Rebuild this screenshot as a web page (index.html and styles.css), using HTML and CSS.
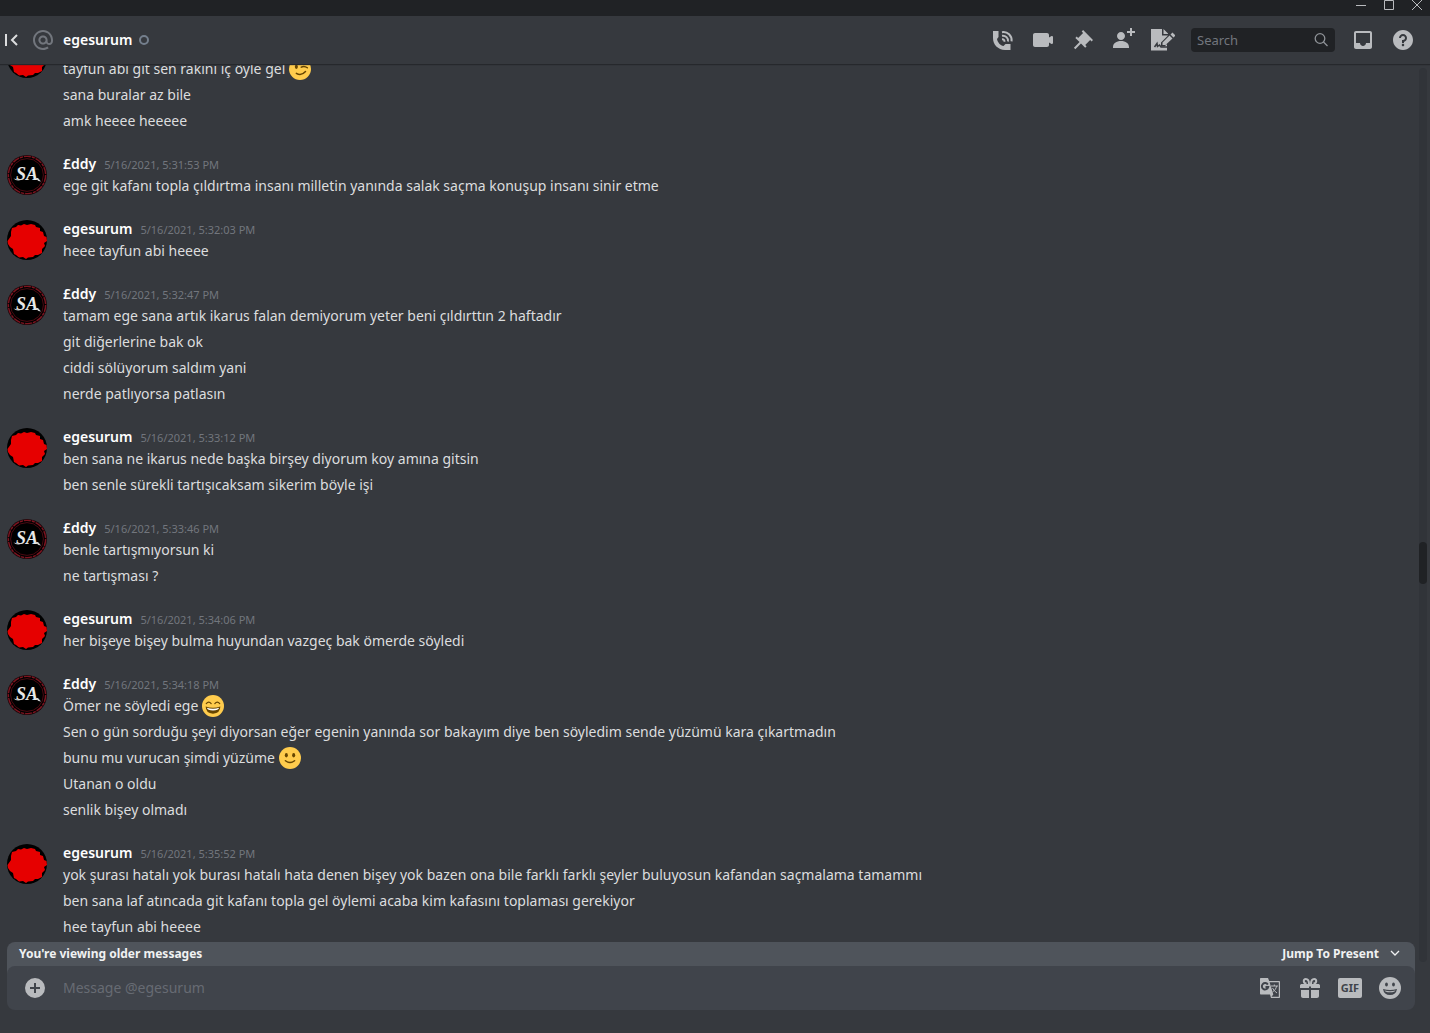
FILE: index.html
```html
<!DOCTYPE html>
<html lang="tr">
<head>
  <meta charset="UTF-8">
  <meta name="viewport" content="width=device-width, initial-scale=1.0">
  <title>@egesurum</title>
  <link rel="stylesheet" href="styles.css">
</head>
<body>
  <svg class="defs" aria-hidden="true">
    <symbol id="avatar-rose" viewBox="0 0 40 40">
      <circle cx="20" cy="20" r="20" fill="#000"/>
      <path fill="#e60000" d="M5 8 L9 7 11 5 14 5.500 17 4 20 5 24 4 28 5 29 7 33 8 33 11 36 12 37 16 39.500 17 40 21 37 23 38 26 35 29 35 33 31 35 28 35 26 37 21 37.500 19 39 16 37 12 37.500 9 35 7 34 6 29 3 27 1 24 .5 21 4 16 4 12Z"/>
    </symbol>
    <symbol id="avatar-sa" viewBox="0 0 40 40">
      <circle cx="20" cy="20" r="20" fill="#1c0508"/>
      <circle cx="20" cy="20" r="18.6" fill="#000" stroke="#7d1420" stroke-width="1.4" stroke-dasharray="7 1 3 1"/>
      <circle cx="20" cy="20" r="16.4" fill="#000" stroke="#4a0a12" stroke-width="1"/>
      <text x="20" y="25" text-anchor="middle" class="avatar-text">SA</text>
      <path d="M6.500 23.500Q10 27 15 24.500L10.500 24.500ZM28 23Q31 26.500 34 26.500L31 23Z" fill="#d0d0d0"/>
    </symbol>
    <symbol id="emoji-wink" viewBox="0 0 36 36">
      <circle cx="18" cy="18" r="18" fill="#ffcc4d"/>
      <path fill="none" stroke="#664500" stroke-width="2.4" stroke-linecap="round" d="M6 9 Q10 4 15 6 M20 15 Q25 12 30 16 M12 25 Q20 30 27 22"/>
      <ellipse cx="12" cy="14.500" rx="2.500" ry="3.500" fill="#664500"/>
    </symbol>
    <symbol id="emoji-smile" viewBox="0 0 36 36">
      <circle cx="18" cy="18" r="18" fill="#ffcc4d"/>
      <path fill="none" stroke="#664500" stroke-width="2" stroke-linecap="round" d="M7 14 Q11 9 15 14 M21 14 Q25 9 29 14"/>
      <path fill="#664500" d="M6 19 Q18 23 30 19 Q30 30 18 30.500 Q6 30 6 19Z"/>
      <path fill="#fff" d="M8 21 Q18 24 28 21 Q27 25.500 18 25.500 Q9 25.500 8 21Z"/>
    </symbol>
    <symbol id="emoji-slight" viewBox="0 0 36 36">
      <circle cx="18" cy="18" r="18" fill="#ffcc4d"/>
      <ellipse cx="12" cy="13.500" rx="2.500" ry="3.500" fill="#664500"/>
      <ellipse cx="24" cy="13.500" rx="2.500" ry="3.500" fill="#664500"/>
      <path fill="none" stroke="#664500" stroke-width="2.400" stroke-linecap="round" d="M10.500 22.500 Q18 28.500 25.500 22.500"/>
    </symbol>
  </svg>

  <div class="titlebar">
    <button aria-label="Minimize"><svg width="10" height="10"><path d="M0 5.500H10"/></svg></button>
    <button aria-label="Maximize"><svg width="10" height="10"><path d="M.5 .5H9.500V9.500H.5Z"/></svg></button>
    <button aria-label="Close"><svg width="10" height="10"><path d="M0 0L10 10M10 0L0 10"/></svg></button>
  </div>

  <header class="header">
    <button class="collapse" aria-label="Collapse sidebar">
      <svg width="14" height="14" viewBox="0 0 14 14"><path d="M2 1V13M13 2L8 7L13 12" fill="none" stroke="currentColor" stroke-width="2"/></svg>
    </button>
    <svg class="at" width="24" height="24" viewBox="0 0 24 24"><path fill="currentColor" d="M12 2C6.486 2 2 6.486 2 12C2 17.515 6.486 22 12 22C14.039 22 15.993 21.398 17.652 20.259L16.521 18.611C15.195 19.519 13.633 20 12 20C7.589 20 4 16.411 4 12C4 7.589 7.589 4 12 4C16.411 4 20 7.589 20 12V12.782C20 14.17 19.402 15 18.4 15L18.398 15.018C18.338 15.005 18.273 15 18.209 15H18C17.437 15 16.6 14.182 16.6 13.631V12C16.6 9.464 14.537 7.4 12 7.4C9.463 7.4 7.4 9.463 7.4 12C7.4 14.537 9.463 16.6 12 16.6C13.234 16.6 14.35 16.106 15.177 15.313C15.826 16.269 16.93 17 18 17L18.002 16.981C18.064 16.994 18.129 17 18.195 17H18.4C20.552 17 22 15.306 22 12.782V12C22 6.486 17.514 2 12 2ZM12 14.599C10.566 14.599 9.4 13.433 9.4 11.999C9.4 10.565 10.566 9.399 12 9.399C13.434 9.399 14.6 10.565 14.6 11.999C14.6 13.433 13.434 14.599 12 14.599Z"/></svg>
    <h1>egesurum</h1>
    <span class="status" title="Offline"></span>

    <div class="toolbar">
      <button aria-label="Start Voice Call"><svg viewBox="0 0 24 24"><path d="M2 3H7.500V9L6 11C6.500 14.500 9.500 17.500 12.500 18L14.500 16H19.500V22H14C7 21.500 2 17 2 10Z"/><path class="line" d="M11 4.200C16.500 3.200 21.200 7.800 20.600 13.300M11 7.700C14.500 7.200 17.500 10 17 13.500M11 11.300C12.700 11.200 13.600 12.200 13.500 13.800"/></svg></button>
      <button aria-label="Start Video Call"><svg viewBox="0 0 24 24"><path d="M21.526 8.149C21.231 7.966 20.862 7.951 20.553 8.105L18 9.382V7C18 5.897 17.103 5 16 5H4C2.897 5 2 5.897 2 7V17C2 18.104 2.897 19 4 19H16C17.103 19 18 18.104 18 17V14.618L20.553 15.894C20.694 15.965 20.847 16 21 16C21.183 16 21.365 15.949 21.526 15.851C21.82 15.668 22 15.347 22 15V9C22 8.653 21.82 8.332 21.526 8.149Z"/></svg></button>
      <button aria-label="Pinned Messages"><svg viewBox="0 0 24 24"><path d="M22 12L12.101 2.101L10.686 3.514L12.101 4.929L7.151 9.878V9.88L5.736 8.465L4.322 9.88L8.565 14.122L2.908 19.778L4.322 21.192L9.979 15.536L14.222 19.778L15.636 18.364L14.222 16.95L19.171 12H19.172L20.586 13.414L22 12Z"/></svg></button>
      <button aria-label="Add Friends to DM"><svg viewBox="0 0 24 24"><path d="M21 3H24V5H21V8H19V5H16V3H19V0H21V3ZM10 12C12.205 12 14 10.205 14 8C14 5.795 12.205 4 10 4C7.795 4 6 5.795 6 8C6 10.205 7.795 12 10 12ZM10 13C5.289 13 2 15.467 2 19V20H18V19C18 15.467 14.711 13 10 13Z"/></svg></button>
      <button aria-label="Edit note"><svg viewBox="0 0 24 24"><path d="M0 1H11V7.500H17L10 14.500V18.500H13.500L16 16V22.500H0ZM12.500 1L17 5.500V6H12.500Z"/><path d="M11.500 14.500L18.500 7.500L21.500 10.500L14.500 17H11.500ZM19.500 6.500L21.500 4.500L24.500 7.500L22.500 9.500Z"/><path class="scribble" d="M3.500 19L6 15.500L6.500 18.500L8.500 17L10 19H16"/></svg></button>
      <label class="search">
        <input type="text" placeholder="Search" aria-label="Search">
        <svg width="16" height="16" viewBox="0 0 16 16"><path d="M7 1.700A4.800 4.800 0 1 0 7 11.300A4.800 4.800 0 1 0 7 1.700M10.500 10L14.500 14" fill="none" stroke="currentColor" stroke-width="1.300"/></svg>
      </label>
      <button aria-label="Inbox"><svg viewBox="0 0 24 24"><path d="M19 3H4.990C3.880 3 3.010 3.890 3.010 5L3 19C3 20.100 3.880 21 4.990 21H19C20.100 21 21 20.100 21 19V5C21 3.890 20.100 3 19 3ZM19 15H15C15 16.660 13.650 18 12 18C10.350 18 9 16.660 9 15H4.990V5H19V15Z"/></svg></button>
      <button aria-label="Help"><svg viewBox="0 0 24 24"><path d="M12 2C6.486 2 2 6.487 2 12C2 17.515 6.486 22 12 22C17.514 22 22 17.515 22 12C22 6.487 17.514 2 12 2ZM12 18.250C11.310 18.250 10.750 17.691 10.750 17C10.750 16.310 11.310 15.750 12 15.750C12.690 15.750 13.250 16.310 13.250 17C13.250 17.691 12.690 18.250 12 18.250ZM13 13.875V15H11V12H12C13.104 12 14 11.103 14 10C14 8.896 13.104 8 12 8C10.896 8 10 8.896 10 10H8C8 7.795 9.795 6 12 6C14.205 6 16 7.795 16 10C16 11.861 14.723 13.429 13 13.875Z"/></svg></button>
    </div>
  </header>

  <main class="chat">
    <div class="messages">
      <article class="group">
        <svg class="avatar"><use href="#avatar-rose"/></svg>
        <div class="content">
          <h2></h2>
          <p>tayfun abi git sen rakını iç öyle gel <svg class="emoji"><use href="#emoji-wink"/></svg></p>
          <p>sana buralar az bile</p>
          <p>amk heeee heeeee</p>
        </div>
      </article>
      <article class="group">
        <svg class="avatar"><use href="#avatar-sa"/></svg>
        <div class="content">
          <h2>£ddy <time>5/16/2021, 5:31:53 PM</time></h2>
          <p>ege git kafanı topla çıldırtma insanı milletin yanında salak saçma konuşup insanı sinir etme</p>
        </div>
      </article>
      <article class="group">
        <svg class="avatar"><use href="#avatar-rose"/></svg>
        <div class="content">
          <h2>egesurum <time>5/16/2021, 5:32:03 PM</time></h2>
          <p>heee tayfun abi heeee</p>
        </div>
      </article>
      <article class="group">
        <svg class="avatar"><use href="#avatar-sa"/></svg>
        <div class="content">
          <h2>£ddy <time>5/16/2021, 5:32:47 PM</time></h2>
          <p>tamam ege sana artık ikarus falan demiyorum yeter beni çıldırttın 2 haftadır</p>
          <p>git diğerlerine bak ok</p>
          <p>ciddi sölüyorum saldım yani</p>
          <p>nerde patlıyorsa patlasın</p>
        </div>
      </article>
      <article class="group">
        <svg class="avatar"><use href="#avatar-rose"/></svg>
        <div class="content">
          <h2>egesurum <time>5/16/2021, 5:33:12 PM</time></h2>
          <p>ben sana ne ikarus nede başka birşey diyorum koy amına gitsin</p>
          <p>ben senle sürekli tartışıcaksam sikerim böyle işi</p>
        </div>
      </article>
      <article class="group">
        <svg class="avatar"><use href="#avatar-sa"/></svg>
        <div class="content">
          <h2>£ddy <time>5/16/2021, 5:33:46 PM</time></h2>
          <p>benle tartışmıyorsun ki</p>
          <p>ne tartışması ?</p>
        </div>
      </article>
      <article class="group">
        <svg class="avatar"><use href="#avatar-rose"/></svg>
        <div class="content">
          <h2>egesurum <time>5/16/2021, 5:34:06 PM</time></h2>
          <p>her bişeye bişey bulma huyundan vazgeç bak ömerde söyledi</p>
        </div>
      </article>
      <article class="group">
        <svg class="avatar"><use href="#avatar-sa"/></svg>
        <div class="content">
          <h2>£ddy <time>5/16/2021, 5:34:18 PM</time></h2>
          <p>Ömer ne söyledi ege <svg class="emoji"><use href="#emoji-smile"/></svg></p>
          <p>Sen o gün sorduğu şeyi diyorsan eğer egenin yanında sor bakayım diye ben söyledim sende yüzümü kara çıkartmadın</p>
          <p>bunu mu vurucan şimdi yüzüme <svg class="emoji"><use href="#emoji-slight"/></svg></p>
          <p>Utanan o oldu</p>
          <p>senlik bişey olmadı</p>
        </div>
      </article>
      <article class="group">
        <svg class="avatar"><use href="#avatar-rose"/></svg>
        <div class="content">
          <h2>egesurum <time>5/16/2021, 5:35:52 PM</time></h2>
          <p>yok şurası hatalı yok burası hatalı hata denen bişey yok bazen ona bile farklı farklı şeyler buluyosun kafandan saçmalama tamammı</p>
          <p>ben sana laf atıncada git kafanı topla gel öylemi acaba kim kafasını toplaması gerekiyor</p>
          <p>hee tayfun abi heeee</p>
        </div>
      </article>
    </div>
    <div class="scrollbar"><div class="thumb"></div></div>
  </main>

  <footer class="composer">
    <div class="banner">
      <span>You're viewing older messages</span>
      <button>Jump To Present
        <svg width="16" height="16" viewBox="0 0 16 16"><path d="M4 5L8 9L12 5" fill="none" stroke="currentColor" stroke-width="1.300"/></svg>
      </button>
    </div>
    <form class="inputbar">
      <button type="button" aria-label="Attach"><svg viewBox="0 0 24 24"><path fill-rule="evenodd" d="M12 2A10 10 0 1 0 12 22A10 10 0 1 0 12 2ZM17 13H13V17H11V13H7V11H11V7H13V11H17Z"/></svg></button>
      <input type="text" placeholder="Message @egesurum" aria-label="Message @egesurum">
      <button type="button" aria-label="Translate"><svg viewBox="0 0 24 24"><path fill-rule="evenodd" d="M3 2H10L11.200 5H21C21.600 5 22 5.400 22 6V21C22 21.600 21.600 22 21 22H13L12 18.500H3C2.400 18.500 2 18 2 17.500V3C2 2.400 2.400 2 3 2ZM11.600 6.200L15.300 18.500L13.500 20.800H20.800V6.200Z"/><path class="g" d="M9.800 8.600A3.200 3.200 0 1 0 10.200 11H7.500"/><path class="thin" d="M13 10H20M16.300 8.500V10M18.800 10Q18 14 14.500 16M14.500 12Q16 15 19 17"/></svg></button>
      <button type="button" aria-label="Gift"><svg viewBox="0 0 24 24"><path d="M2 12V9.500C2 8.500 3 8 4 8H20C21 8 22 8.500 22 9.500V12H13V10.500H11V12ZM3 14H11V22H5C3.900 22 3 21.100 3 20ZM13 14H21V20C21 21.100 20.100 22 19 22H13Z"/><path class="line" d="M11 8C11 4.500 9.500 3 7.800 3C5 3 5 7.500 8.500 7.500M13 8C13 4.500 14.500 3 16.200 3C19 3 19 7.500 15.500 7.500"/></svg></button>
      <button type="button" class="gif">GIF</button>
      <button type="button" aria-label="Emoji"><svg viewBox="0 0 24 24"><circle cx="12" cy="12" r="11"/><g class="face"><ellipse cx="8.500" cy="8.500" rx="1.400" ry="2"/><ellipse cx="15.500" cy="8.500" rx="1.400" ry="2"/><path d="M5 13Q12 15 19 13Q18 19 12 19Q6 19 5 13Z"/></g><path d="M6.500 14.500Q12 16 17.500 14.500Q17 16.300 12 16.300Q7 16.300 6.500 14.500Z"/></svg></button>
    </form>
  </footer>
</body>
</html>
```
FILE: styles.css
```css
* {
  box-sizing: border-box;
}
body {
  display: flex;
  flex-direction: column;
  height: 100vh;
  margin: 0;
  overflow: hidden;
  background-color: #36393e;
  color: #dcddde;
  font-family: "Noto Sans", sans-serif;
  font-size: 14px;
  line-height: 22px;
}
button {
  display: flex;
  align-items: center;
  padding: 0;
  border: none;
  background: none;
  color: inherit;
  font: inherit;
  cursor: pointer;
}
input {
  min-width: 0;
  padding: 0;
  border: none;
  outline: none;
  background: none;
  color: #dcddde;
  font: inherit;
}
.defs {
  position: absolute;
  width: 0;
  height: 0;
}

/* window buttons */
.titlebar {
  display: flex;
  flex: none;
  justify-content: flex-end;
  gap: 18px;
  height: 16px;
  padding-right: 8px;
  background-color: #202225;
}
.titlebar button {
  align-items: flex-start;
}
.titlebar svg {
  fill: none;
  stroke: #b9bbbe;
}

/* top bar */
.header {
  display: flex;
  flex: none;
  align-items: center;
  height: 48px;
  padding: 0 15px 0 4px;
  box-shadow: 0 1px 1px #26282c;
  z-index: 1;
}
.collapse {
  margin-right: 13px;
}
.at {
  flex: none;
  margin-right: 8px;
  color: #72767d;
}
.header h1 {
  margin: 0;
  color: #fff;
  font-size: 14px;
  font-weight: 600;
}
.status {
  width: 10px;
  height: 10px;
  margin-left: 7px;
  border: 2px solid #747f8d;
  border-radius: 50%;
}
.toolbar {
  display: flex;
  gap: 16px;
  margin-left: auto;
  color: #b9bbbe;
}
.toolbar button svg,
.inputbar svg {
  display: block;
  width: 24px;
  height: 24px;
  fill: #b9bbbe;
}
.toolbar .line,
.inputbar .line {
  fill: none;
  stroke: #b9bbbe;
  stroke-width: 2;
}
.toolbar .scribble {
  fill: none;
  stroke: #36393e;
  stroke-width: 1.5;
}
.search {
  display: flex;
  align-items: center;
  width: 144px;
  height: 24px;
  padding: 0 6px;
  border-radius: 4px;
  background-color: #202225;
  color: #8e9297;
}
.search input {
  flex: 1;
  font-size: 13px;
}
.search input::placeholder {
  color: #72767d;
}

/* message list, kept at its newest loaded message */
.chat {
  display: flex;
  flex: 1;
  min-height: 0;
}
.messages {
  display: flex;
  flex: 1;
  flex-direction: column;
  justify-content: flex-end;
  padding-bottom: 2px;
  overflow: hidden;
}
.group {
  display: flex;
  flex: none;
  gap: 16px;
  margin-top: 17px;
  padding: 2px 7px;
}
.avatar {
  flex: none;
  width: 40px;
  height: 40px;
  margin-top: 2px;
}
.avatar-text {
  fill: #e8e8e8;
  font: italic bold 18px "Liberation Serif", serif;
}
.content h2 {
  display: flex;
  align-items: baseline;
  gap: 8px;
  height: 22px;
  margin: 0;
  color: #fff;
  font-size: 14px;
  font-weight: 600;
}
.content time {
  color: #72767d;
  font-size: 11px;
  font-weight: 400;
}
.content p {
  height: 22px;
  margin: 0 0 4px;
}
.content p:last-child {
  margin-bottom: 0;
}
.emoji {
  width: 22px;
  height: 22px;
  vertical-align: bottom;
}
.scrollbar {
  position: relative;
  width: 8px;
  margin: 4px 3px -20px 0;
  border-radius: 4px;
  background-color: #313439;
}
.thumb {
  position: absolute;
  top: 53%;
  width: 100%;
  height: 42px;
  border-radius: 4px;
  background-color: #202225;
}

/* older messages bar and text box */
.composer {
  flex: none;
  padding: 0 15px 23px 7px;
}
.banner {
  display: flex;
  justify-content: space-between;
  padding: 1px 12px 9px;
  margin-bottom: -8px;
  border-radius: 8px 8px 0 0;
  background-color: #4f545b;
  color: #f0f1f2;
  font-size: 12px;
  font-weight: 700;
}
.banner button {
  gap: 8px;
}
.inputbar {
  position: relative;
  display: flex;
  align-items: center;
  gap: 16px;
  height: 44px;
  padding: 0 13px 0 16px;
  border-radius: 8px;
  background-color: #40444b;
}
.inputbar input {
  flex: 1;
}
.inputbar input::placeholder {
  color: #676b73;
}
.inputbar .g,
.inputbar .thin {
  fill: none;
  stroke: #40444b;
  stroke-width: 2;
}
.inputbar .thin {
  stroke: #b9bbbe;
  stroke-width: 1;
}
.inputbar .face {
  fill: #40444b;
}
.gif {
  justify-content: center;
  width: 24px;
  height: 20px;
  border-radius: 2px;
  background-color: #b9bbbe;
  color: #40444b;
  font-size: 11px;
  font-weight: 700;
}
```
